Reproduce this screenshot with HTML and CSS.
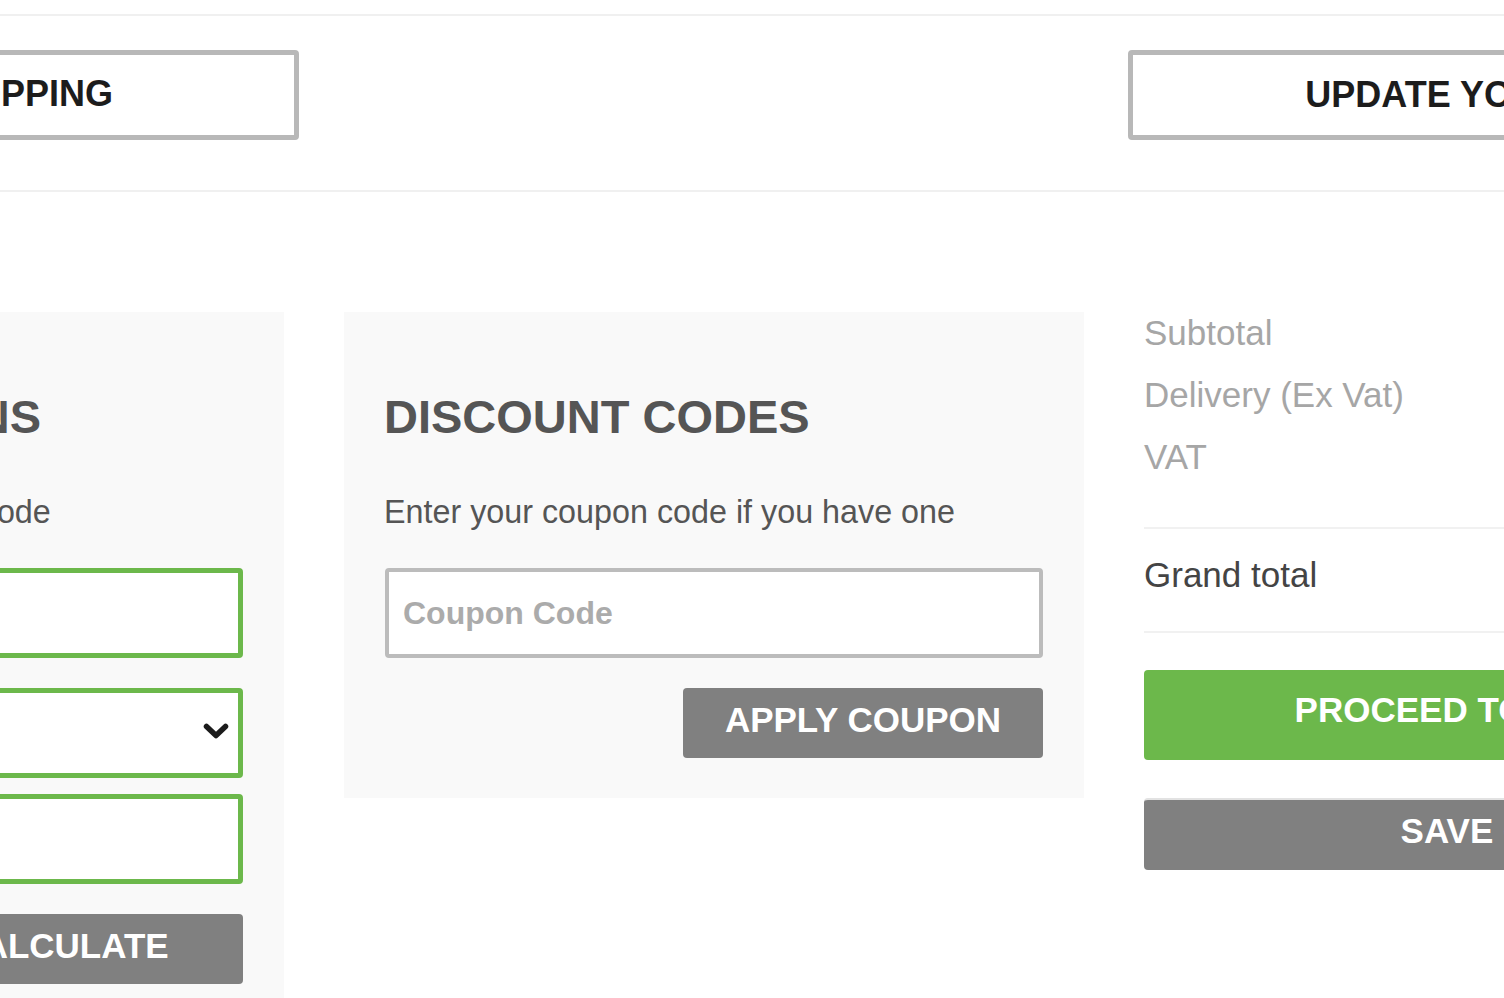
FILE: index.html
```html
<!DOCTYPE html>
<html lang="en">
<head>
<meta charset="utf-8">
<title>Shopping Cart</title>
<link rel="stylesheet" href="styles.css">
</head>
<body>
<div class="page">
  <div class="cart-actions">
    <a class="btn-outline btn-continue" href="#">CONTINUE SHOPPING</a>
    <button class="btn-outline btn-update" type="button">UPDATE YOUR CART</button>
  </div>

  <div class="cart-bottom">
    <section class="panel">
      <h2 class="panel-title">DELIVERY OPTIONS</h2>
      <p class="panel-text">Enter your country and postcode</p>
      <input class="field field-valid" type="text" aria-label="Country">
      <div class="select-wrap">
        <select class="field field-valid field-select" aria-label="Region"><option></option></select>
        <svg class="chevron" width="26" height="17" viewBox="0 0 26 17" aria-hidden="true">
          <polyline points="3.5,3.5 13,12.5 22.5,3.5" fill="none" stroke="#1b1b1b" stroke-width="5.5" stroke-linecap="round" stroke-linejoin="round"/>
        </svg>
      </div>
      <input class="field field-valid field-last" type="text" aria-label="Postcode">
      <button class="btn-grey" type="button">CALCULATE</button>
    </section>

    <section class="panel">
      <h2 class="panel-title">DISCOUNT CODES</h2>
      <p class="panel-text">Enter your coupon code if you have one</p>
      <input class="field field-coupon" type="text" placeholder="Coupon Code">
      <button class="btn-grey" type="button">APPLY COUPON</button>
    </section>

    <section class="summary">
      <div class="summary-row"><span>Subtotal</span><span>£0.00</span></div>
      <div class="summary-row"><span>Delivery (Ex Vat)</span><span>£0.00</span></div>
      <div class="summary-row"><span>VAT</span><span>£0.00</span></div>
      <div class="summary-total"><span>Grand total</span><span>£0.00</span></div>
      <button class="btn-proceed" type="button">PROCEED TO CHECKOUT</button>
      <button class="btn-save" type="button">SAVE QUOTE</button>
    </section>
  </div>
</div>
</body>
</html>
```

FILE: styles.css
```css
html, body {
  margin: 0;
  padding: 0;
  overflow: hidden;
  background: #ffffff;
}

body {
  font-family: "Liberation Sans", Arial, Helvetica, sans-serif;
}

.page {
  margin-left: -461px;
  width: 2345px;
  padding-top: 14px;
}

/* top action bar */
.cart-actions {
  display: flex;
  justify-content: space-between;
  padding: 34px 33px 50px 0;
  border-top: 2px solid #f0f0f0;
  border-bottom: 2px solid #f0f0f0;
}

.btn-outline {
  display: inline-flex;
  align-items: center;
  justify-content: center;
  box-sizing: border-box;
  height: 90px;
  padding-bottom: 2px;
  border: 5px solid #b8b8b8;
  border-radius: 4px;
  background: #ffffff;
  color: #1c1c1c;
  font-family: "Liberation Sans", Arial, Helvetica, sans-serif;
  font-weight: bold;
  font-size: 36px;
  text-decoration: none;
  white-space: nowrap;
}

.btn-continue { padding-left: 181px; padding-right: 181px; }
.btn-update { padding-left: 172px; padding-right: 172px; }

/* bottom area */
.cart-bottom {
  display: grid;
  grid-template-columns: repeat(3, 740px);
  column-gap: 60px;
  align-items: start;
  margin: 120px 0 0 5px;
}

.panel {
  display: flex;
  flex-direction: column;
  background: #f9f9f9;
  padding: 0 40px 40px;
}

.panel-title {
  margin: 77px 0 47px;
  font-size: 47px;
  line-height: 56px;
  font-weight: bold;
  color: #555555;
  white-space: nowrap;
}

.panel-text {
  margin: 0 0 36px;
  font-size: 32.3px;
  line-height: 40px;
  color: #555555;
  white-space: nowrap;
}

.field {
  display: block;
  box-sizing: border-box;
  width: calc(100% - 2px);
  margin: 0 0 0 1px;
  height: 90px;
  border-radius: 4px;
  background: #ffffff;
  font-family: "Liberation Sans", Arial, Helvetica, sans-serif;
  font-size: 32px;
  outline: none;
}

.field-valid {
  border: 5px solid #6cb84b;
  margin-bottom: 30px;
}

.field-last {
  margin-bottom: 30px;
}

.select-wrap {
  position: relative;
  margin-bottom: 16px;
}

.select-wrap .field {
  margin-bottom: 0;
  width: calc(100% - 2px);
}

.field-select {
  appearance: none;
  -webkit-appearance: none;
  padding: 0 16px;
}

.chevron {
  position: absolute;
  right: 15px;
  top: 35px;
}

.field-coupon {
  border: 4px solid #bcbcbc;
  padding: 0 14px;
  margin-bottom: 30px;
  color: #444444;
  font-weight: bold;
}

.field-coupon::placeholder {
  color: #ababab;
  font-weight: bold;
}

.btn-grey {
  align-self: flex-end;
  box-sizing: border-box;
  width: 360px;
  height: 70px;
  margin-right: 1px;
  padding: 0 0 7px;
  border: 0;
  border-radius: 4px;
  background: #808080;
  color: #ffffff;
  font-family: "Liberation Sans", Arial, Helvetica, sans-serif;
  font-weight: bold;
  font-size: 35px;
  white-space: nowrap;
}

/* summary */
.summary {
  display: flex;
  flex-direction: column;
}

.summary-row {
  display: flex;
  justify-content: space-between;
  padding: 1px 0 21px;
  font-size: 35px;
  line-height: 40px;
  color: #a6a6a6;
}

.summary-total {
  display: flex;
  justify-content: space-between;
  margin-top: 29px;
  padding: 26px 0 36px;
  border-top: 2px solid #f1f1f1;
  border-bottom: 2px solid #f1f1f1;
  font-size: 35px;
  line-height: 40px;
  color: #444444;
}

.btn-proceed,
.btn-save {
  box-sizing: border-box;
  width: 100%;
  border: 0;
  border-radius: 4px;
  color: #ffffff;
  font-family: "Liberation Sans", Arial, Helvetica, sans-serif;
  font-weight: bold;
  font-size: 35px;
  white-space: nowrap;
}

.btn-proceed {
  margin-top: 37px;
  height: 90px;
  padding: 0 0 10px;
  background: #6cb84b;
}

.btn-save {
  margin-top: 38px;
  height: 72px;
  padding: 0 0 8px;
  border-top: 2px solid #e2e2e2;
  background: #808080;
}
```
